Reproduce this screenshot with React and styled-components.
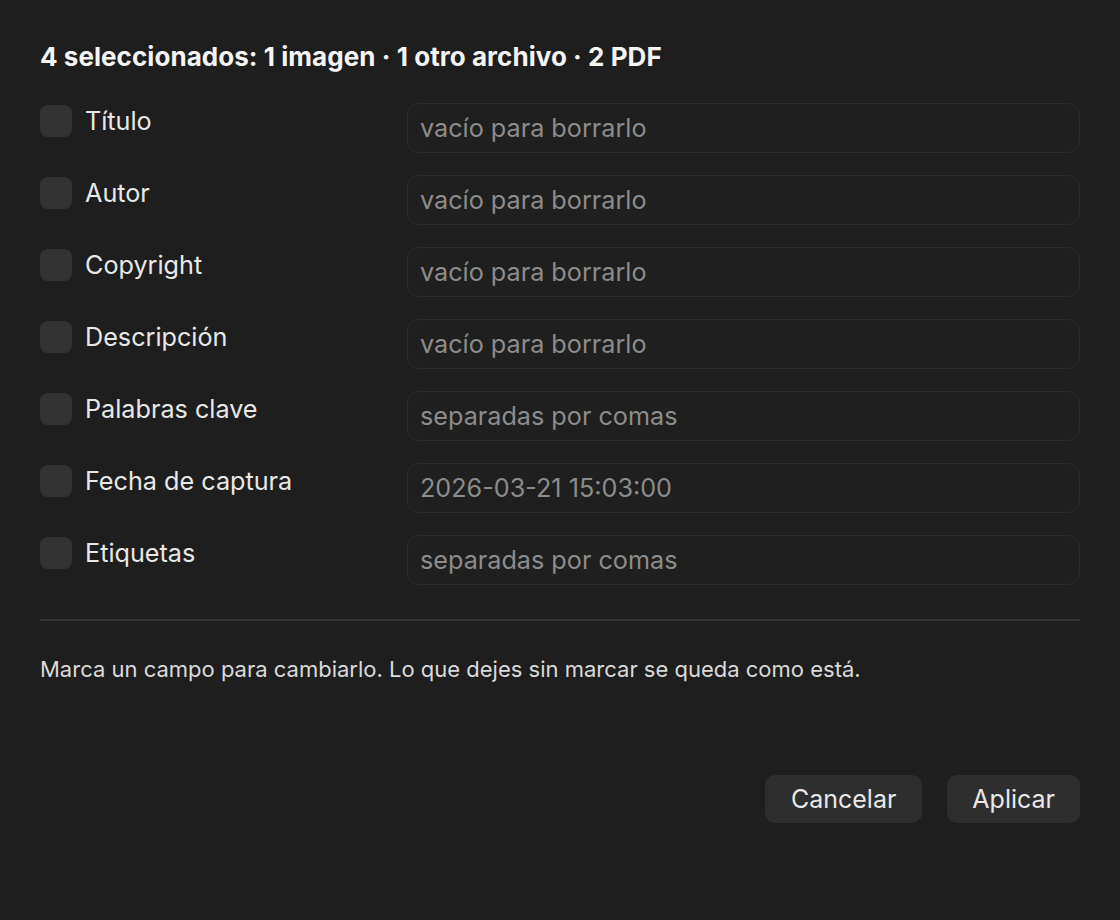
import React from "react"
import styled, { createGlobalStyle } from "styled-components"

const GlobalStyle = createGlobalStyle`
  html, body {
    margin: 0;
    padding: 0;
    background: #1e1e1e;
  }
  body {
    font-family: Inter, "Liberation Sans", sans-serif;
    -webkit-font-smoothing: antialiased;
  }
`

const Sheet = styled.div`
  width: 1120px;
  height: 920px;
  box-sizing: border-box;
  padding: 40px 40px 0;
  background: #1e1e1e;
  display: flex;
  flex-direction: column;
`

const Heading = styled.h2`
  margin: 0;
  font-size: 26px;
  font-weight: 700;
  color: #f4f4f4;
  line-height: 34px;
  letter-spacing: 0.05px;
`

const Fields = styled.div`
  display: flex;
  flex-direction: column;
  gap: 22px;
  margin-top: 29px;
`

const Row = styled.div`
  display: grid;
  grid-template-columns: 367px 1fr;
  align-items: start;
`

const LabelSide = styled.label`
  display: flex;
  align-items: center;
  gap: 13px;
  height: 36px;
`

const Check = styled.span`
  width: 32px;
  height: 32px;
  border-radius: 8px;
  background: #333333;
  flex-shrink: 0;
`

const LabelText = styled.span`
  font-size: 25.2px;
  color: #e8e8e8;
`

const Field = styled.input`
  box-sizing: border-box;
  width: 100%;
  height: 50px;
  border-radius: 12px;
  border: 1.5px solid #2c2c2c;
  background: #1f1f1f;
  padding: 0 12px;
  font-family: inherit;
  font-size: 25.2px;
  color: #e8e8e8;
  outline: none;

  &::placeholder {
    color: #8c8c8c;
  }
`

const Divider = styled.hr`
  margin: 34px 0 0;
  border: none;
  height: 2px;
  background: #333333;
`

const Hint = styled.p`
  margin: 34px 0 0;
  font-size: 22px;
  color: #dadada;
  line-height: 28px;
`

const Actions = styled.div`
  display: flex;
  justify-content: flex-end;
  gap: 25px;
  margin-top: 92px;
`

const Button = styled.button`
  height: 48px;
  padding: 0 ${p => p.$pad}px;
  border: none;
  border-radius: 10px;
  background: #2e2e2e;
  color: #e8e8e8;
  font-family: inherit;
  font-size: 25px;
  cursor: pointer;
`

const fields = [
  { label: "Título", placeholder: "vacío para borrarlo" },
  { label: "Autor", placeholder: "vacío para borrarlo" },
  { label: "Copyright", placeholder: "vacío para borrarlo" },
  { label: "Descripción", placeholder: "vacío para borrarlo" },
  { label: "Palabras clave", placeholder: "separadas por comas" },
  { label: "Fecha de captura", placeholder: "2026-03-21 15:03:00" },
  { label: "Etiquetas", placeholder: "separadas por comas" },
]

const App = () => {
  return (
    <Sheet>
      <GlobalStyle />
      <Heading>4 seleccionados: 1 imagen · 1 otro archivo · 2 PDF</Heading>
      <Fields>
        {fields.map(item => (
          <Row key={item.label}>
            <LabelSide>
              <Check />
              <LabelText>{item.label}</LabelText>
            </LabelSide>
            <Field placeholder={item.placeholder} />
          </Row>
        ))}
      </Fields>
      <Divider />
      <Hint>Marca un campo para cambiarlo. Lo que dejes sin marcar se queda como está.</Hint>
      <Actions>
        <Button $pad={26}>Cancelar</Button>
        <Button $pad={25}>Aplicar</Button>
      </Actions>
    </Sheet>
  )
}

export default App
